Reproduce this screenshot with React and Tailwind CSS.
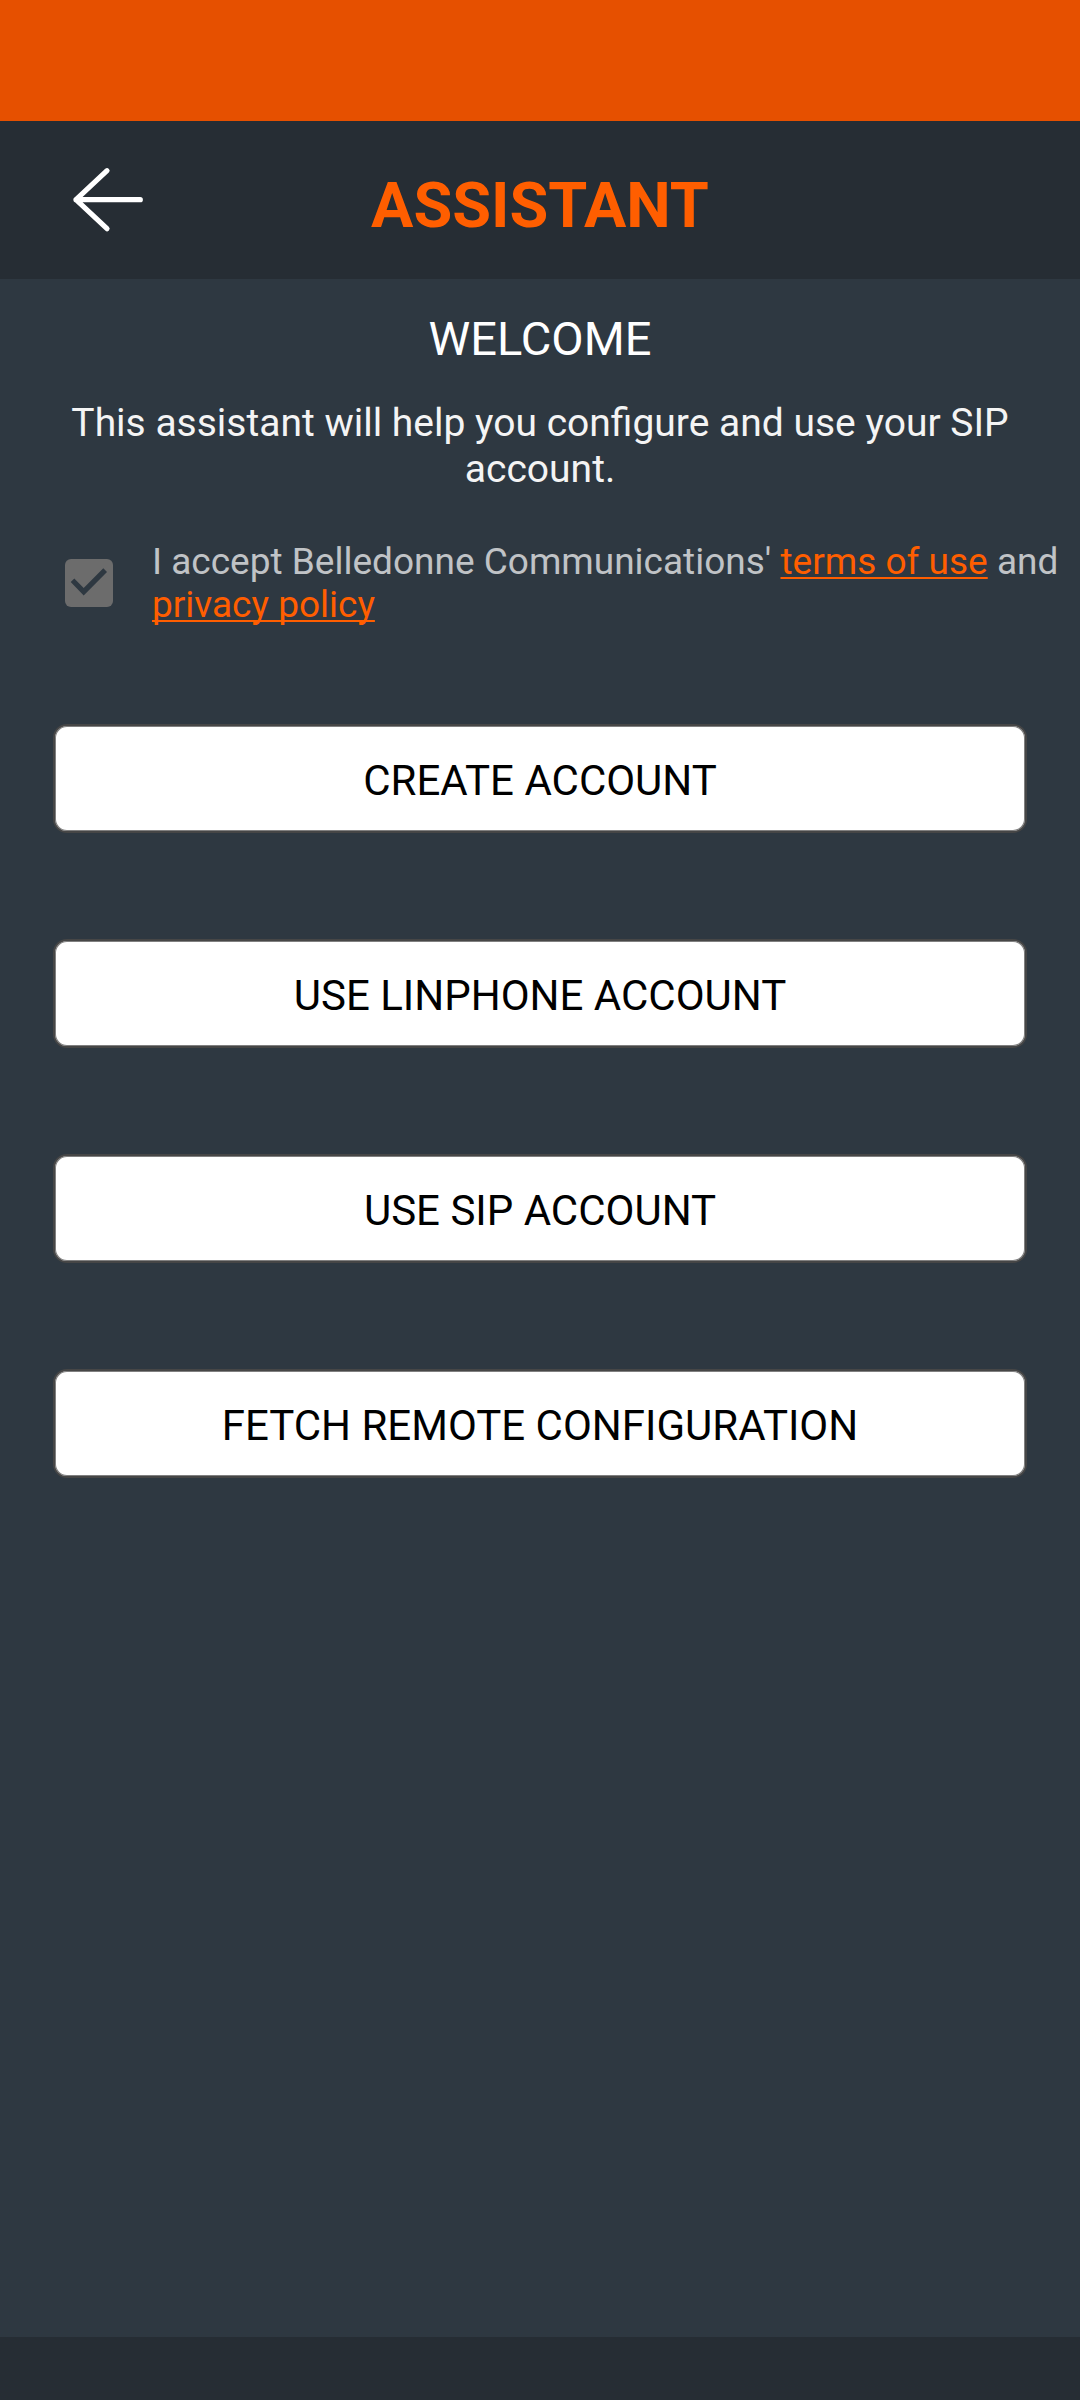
const actions = ["CREATE ACCOUNT", "USE LINPHONE ACCOUNT", "USE SIP ACCOUNT", "FETCH REMOTE CONFIGURATION"];

const linkClass = "text-[#ff5e00] underline decoration-2 underline-offset-[3px] [text-decoration-skip-ink:none]";

function Checkbox({ id }) {
  return (
    <span className="relative size-12 shrink-0">
      <input id={id} type="checkbox" defaultChecked className="peer block size-full appearance-none rounded-md bg-[#6c6c6c]" />
      <svg className="pointer-events-none absolute inset-0 hidden peer-checked:block" width="48" height="48" viewBox="0 0 48 48" fill="#2e3841">
        <path d="M5.7 23L9.3 19.5L18.7 29L38.3 9.3L42 13L18.7 36.6Z" />
      </svg>
    </span>
  );
}

export default function App() {
  return (
    <div className="flex min-h-screen flex-col bg-[#2e3841] font-['Roboto',sans-serif] text-white">
      <div className="h-[121px] bg-[#e65000]" />
      <header className="grid h-[158px] grid-cols-[216px_1fr_216px] items-center bg-[#262d34]">
        <button type="button" aria-label="Back" className="flex h-full items-center justify-center">
          <svg width="72" height="66" viewBox="0 0 72 66" fill="none" stroke="white" strokeWidth="5.2" strokeLinecap="round" strokeLinejoin="round">
            <path d="M35 3.7L4 32.7L35 61.7M4 32.7H68.3" />
          </svg>
        </button>
        <h1 className="pt-3 text-center text-[63px] leading-[74px] font-bold text-[#ff5e00]">ASSISTANT</h1>
      </header>
      <main className="flex flex-1 flex-col">
        <h2 className="mt-8 text-center text-[47px] leading-[56px]">WELCOME</h2>
        <p className="mx-14 mt-[33px] text-center text-[39px] leading-[46px] text-[#f4f4f4]">This assistant will help you configure and use your SIP account.</p>
        <div className="mt-12 flex items-center pl-[65px]">
          <Checkbox id="terms" />
          <label htmlFor="terms" className="ml-[39px] text-[37px] leading-[43px] text-[#c0c3c6]">
            I accept Belledonne Communications' <a href="#terms" className={linkClass}>terms of use</a> and <a href="#privacy" className={linkClass}>privacy policy</a>
          </label>
        </div>
        <div className="mx-[53px] mt-[98px] flex flex-col gap-[106px]">
          {actions.map((label) => (
            <button key={label} type="button" className="h-[109px] rounded-[14px] border-2 border-[#464646] bg-white pt-1 text-[42px] text-black inset-ring inset-ring-[#808080]">{label}</button>
          ))}
        </div>
      </main>
      <footer className="h-[63px] bg-[#262d34]" />
    </div>
  );
}
